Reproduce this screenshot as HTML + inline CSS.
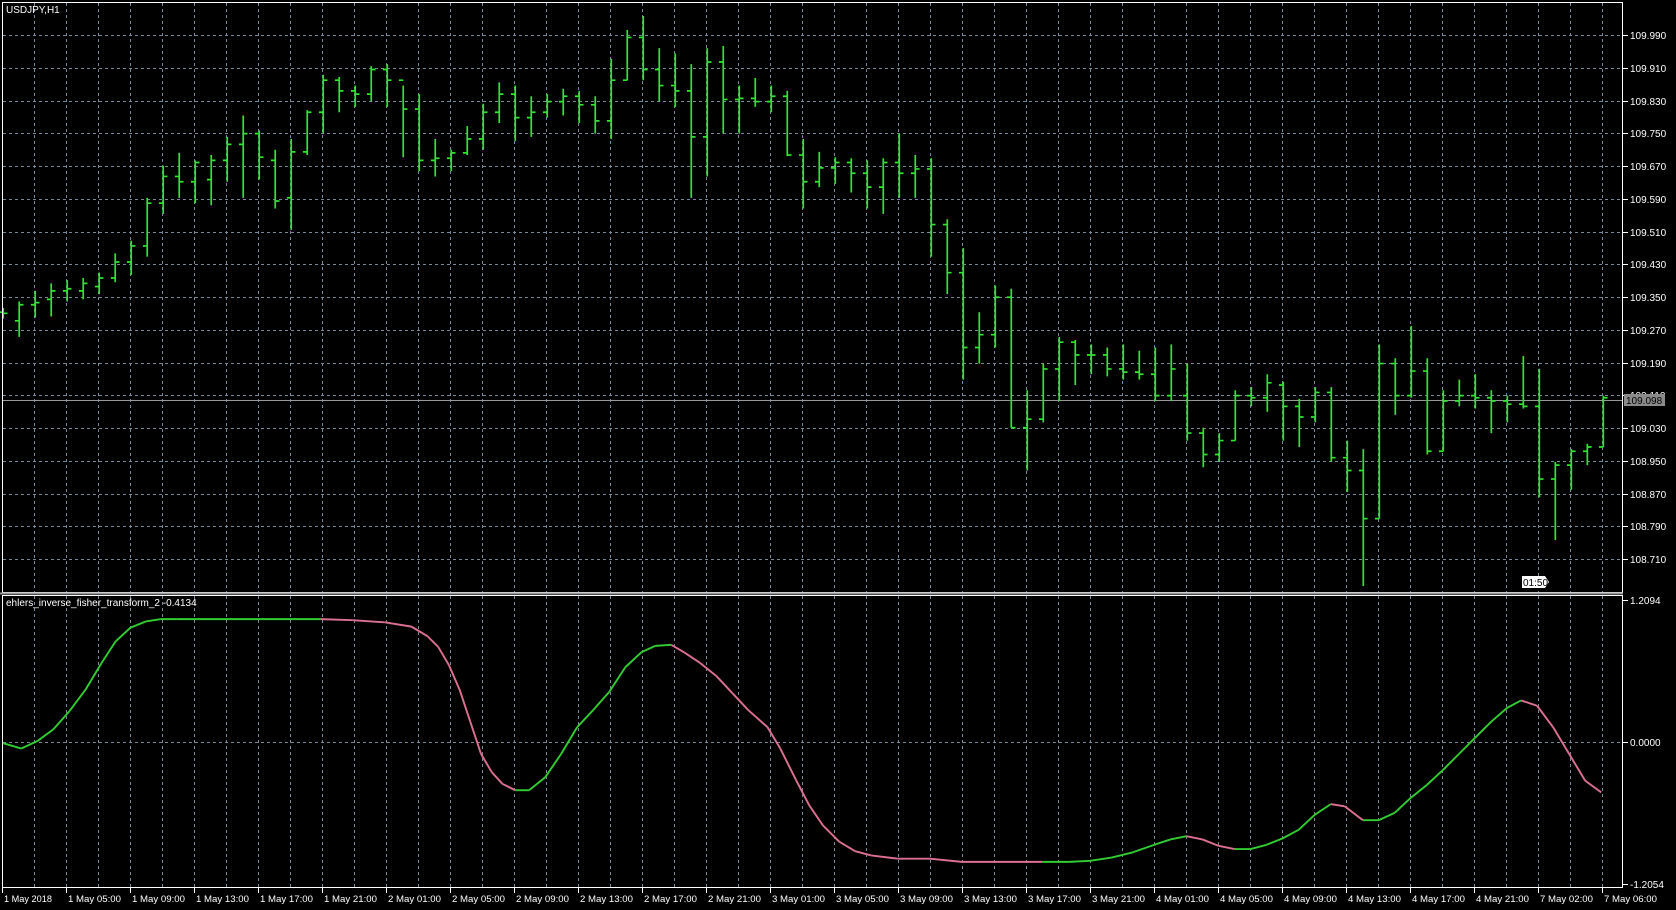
<!DOCTYPE html>
<html><head><meta charset="utf-8"><style>
html,body{margin:0;padding:0;background:#000;width:1676px;height:910px;overflow:hidden}
svg{position:absolute;left:0;top:0}
text{font-family:"Liberation Sans",sans-serif;font-size:11px;fill:#fff}
</style></head><body>
<svg id="g" width="1676" height="910"></svg>
<svg id="d" width="1676" height="910" viewBox="0 0 1568 851" preserveAspectRatio="none"></svg>
<svg id="t" width="1676" height="910"></svg>
<script>
var NS="http://www.w3.org/2000/svg";
function el(p,tag,a,txt){var e=document.createElementNS(NS,tag);for(var k in a)e.setAttribute(k,a[k]);if(txt!=null)e.textContent=txt;p.appendChild(e);return e;}
var g=document.getElementById('g'),d=document.getElementById('d'),t=document.getElementById('t');
var gs={stroke:'#77889a','stroke-width':1,'stroke-dasharray':'3,3'};
for(var x=34;x<1623;x+=32){el(g,'line',Object.assign({x1:x+.5,x2:x+.5,y1:3,y2:592},gs));el(g,'line',Object.assign({x1:x+.5,x2:x+.5,y1:596,y2:887},gs));}
for(var i=0;i<17;i++){var y=Math.round(35+32.75*i);el(g,'line',Object.assign({x1:3,x2:1622,y1:y+.5,y2:y+.5},gs));
 el(t,'line',{x1:1623,x2:1628,y1:y+.5,y2:y+.5,stroke:'#fff'});
 el(t,'text',{x:1630,y:y+4,style:'font-size:10px'},(109.99-0.08*i).toFixed(3));}
el(g,'line',Object.assign({x1:3,x2:1622,y1:742.5,y2:742.5},gs));
el(g,'line',{x1:3,x2:1622,y1:400.5,y2:400.5,stroke:'#999'});
el(t,'rect',{x:2.5,y:2.5,width:1620,height:590,fill:'none',stroke:'#fff'});
el(t,'rect',{x:2.5,y:595.5,width:1620,height:292,fill:'none',stroke:'#fff'});
el(t,'rect',{x:0,y:592.5,width:1623,height:2,fill:'#999'});
el(t,'text',{x:6,y:13,style:'font-size:10px'},'USDJPY,H1');
el(t,'text',{x:6,y:606,style:'font-size:10px'},'ehlers_inverse_fisher_transform_2 -0.4134');
el(t,'text',{x:1630,y:604,style:'font-size:10px'},'1.2094');el(t,'text',{x:1630,y:746,style:'font-size:10px'},'0.0000');el(t,'text',{x:1630,y:888,style:'font-size:10px'},'-1.2054');
[600,742,884].forEach(function(y){el(t,'line',{x1:1623,x2:1628,y1:y+.5,y2:y+.5,stroke:'#fff'})});
el(t,'rect',{x:1624,y:394,width:41,height:12,fill:'#8a8a8a'});el(t,'text',{x:1626,y:404,style:'fill:#000;font-size:10px'},'109.098');
el(t,'path',{d:'M1522 576h23l4 6l-4 6h-23z',fill:'#fff'});el(t,'text',{x:1523,y:586,style:'fill:#000;font-size:10px'},'01:50');
var labs=['1 May 2018','1 May 05:00','1 May 09:00','1 May 13:00','1 May 17:00','1 May 21:00','2 May 01:00','2 May 05:00','2 May 09:00','2 May 13:00','2 May 17:00','2 May 21:00','3 May 01:00','3 May 05:00','3 May 09:00','3 May 13:00','3 May 17:00','3 May 21:00','4 May 01:00','4 May 05:00','4 May 09:00','4 May 13:00','4 May 17:00','4 May 21:00','7 May 02:00','7 May 06:00'];
labs.forEach(function(s,k){var x=2+64*k;el(t,'line',{x1:x+.5,x2:x+.5,y1:888,y2:893,stroke:'#fff'});el(t,'text',{x:x+2,y:902,style:'font-size:9.5px',textLength:s.length>10?53:48,lengthAdjust:'spacingAndGlyphs'},s);});
var B=[[288,298,292,293],[282,315,300,285],[272,297,285,283],[265,296,280,272],[262,282,272,270],[260,280,272,265],[255,275,268,260],[237,264,260,245],[225,257,245,230],[185,240,230,190],[155,200,190,165],[143,185,165,170],[150,190,170,152],[145,192,168,150],[128,170,150,135],[108,185,135,125],[122,168,125,147],[140,195,150,188],[130,215,185,142],[103,145,142,105],[70,125,105,75],[72,105,75,85],[80,100,85,88],[62,95,88,65],[60,100,65,75],[80,147,75,102],[88,160,102,150],[130,165,150,148],[140,160,148,143],[118,145,143,130],[97,140,130,105],[77,115,105,88],[80,132,88,110],[90,128,110,105],[88,110,105,95],[83,108,95,90],[85,115,90,98],[90,125,98,113],[55,130,113,75],[28,75,75,35],[15,75,35,65],[45,95,65,80],[50,100,80,85],[60,185,85,128],[45,165,128,58],[43,125,58,93],[80,125,93,92],[73,100,92,95],[80,105,95,90],[85,146,90,145],[130,195,145,170],[142,175,170,157],[147,172,157,152],[148,180,152,162],[150,195,162,175],[148,200,175,152],[125,185,152,162],[145,185,162,158],[148,240,158,210],[205,275,210,255],[232,355,255,325],[292,340,325,313],[267,325,313,278],[270,400,278,400],[365,440,400,392],[340,395,392,345],[315,375,345,320],[318,360,320,332],[322,350,332,332],[325,352,332,345],[322,355,345,348],[328,355,348,350],[325,375,350,370],[322,375,370,345],[340,412,370,405],[400,437,405,425],[405,432,425,412],[365,412,412,370],[362,380,370,372],[350,385,372,358],[357,412,360,380],[373,418,380,390],[362,395,390,367],[362,432,367,428],[412,460,428,440],[420,548,440,485],[322,485,485,340],[335,388,340,370],[305,372,370,347],[335,425,347,422],[365,422,422,375],[355,380,375,370],[350,382,370,372],[365,405,372,375],[370,395,375,378],[333,382,378,380],[345,465,380,448],[432,505,448,435],[420,458,435,422],[415,435,422,418],[370,418,418,372]];
var p='';B.forEach(function(b,i){var x=3+14.97*i;p+='M'+x+' '+b[0]+'V'+b[1]+'M'+(x-4)+' '+b[2]+'H'+x+'M'+x+' '+b[3]+'H'+(x+4);});
el(d,'path',{d:p,stroke:'#2ee62e','stroke-width':1.6,fill:'none'});
var P=[[3,695],[20,700],[35,693],[50,682],[65,665],[80,645],[95,620],[108,600],[122,587],[137,581],[150,579],[165,579],[300,579],[330,580],[360,582],[385,586],[400,595],[410,605],[420,622],[430,645],[440,675],[450,705],[460,722],[470,733],[482,739],[495,739],[510,727],[525,705],[540,680],[555,664],[570,647],[585,624],[600,610],[613,604],[628,603],[640,610],[655,620],[670,632],[685,648],[700,664],[718,680],[730,700],[745,730],[757,753],[770,772],[785,787],[800,796],[815,800],[840,803],[870,803],[900,806],[975,806],[1000,806],[1020,805],[1040,802],[1060,797],[1080,790],[1095,785],[1110,782],[1125,785],[1140,791],[1155,794],[1170,794],[1185,790],[1200,784],[1215,776],[1230,762],[1245,752],[1258,754],[1275,767],[1290,767],[1305,760],[1320,746],[1335,734],[1350,720],[1365,705],[1380,690],[1395,675],[1410,662],[1423,655],[1438,660],[1453,680],[1468,705],[1483,730],[1498,741]];
var pink=[[300,482],[628,975],[1110,1160],[1245,1280],[1423,1600]];
for(var i=0;i<P.length-1;i++){var m=(P[i][0]+P[i+1][0])/2,c='#32cd32';pink.forEach(function(r){if(m>r[0]&&m<r[1])c='#db7093'});
el(d,'line',{x1:P[i][0],y1:P[i][1],x2:P[i+1][0],y2:P[i+1][1],stroke:c,'stroke-width':1.8});}
</script>
</body></html>
